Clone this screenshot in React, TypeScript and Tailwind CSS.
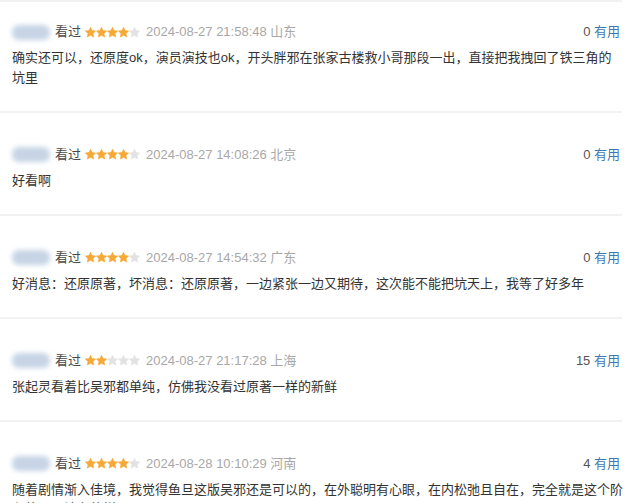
import React from "react";

type Review = {
  stars: number;
  time: string;
  loc: string;
  useful: number;
  text: string;
};

const reviews: Review[] = [
  {
    stars: 4,
    time: "2024-08-27 21:58:48",
    loc: "山东",
    useful: 0,
    text: "确实还可以，还原度ok，演员演技也ok，开头胖邪在张家古楼救小哥那段一出，直接把我拽回了铁三角的坑里",
  },
  { stars: 4, time: "2024-08-27 14:08:26", loc: "北京", useful: 0, text: "好看啊" },
  {
    stars: 4,
    time: "2024-08-27 14:54:32",
    loc: "广东",
    useful: 0,
    text: "好消息：还原原著，坏消息：还原原著，一边紧张一边又期待，这次能不能把坑天上，我等了好多年",
  },
  {
    stars: 2,
    time: "2024-08-27 21:17:28",
    loc: "上海",
    useful: 15,
    text: "张起灵看着比吴邪都单纯，仿佛我没看过原著一样的新鲜",
  },
  {
    stars: 4,
    time: "2024-08-28 10:10:29",
    loc: "河南",
    useful: 4,
    text: "随着剧情渐入佳境，我觉得鱼旦这版吴邪还是可以的，在外聪明有心眼，在内松弛且自在，完全就是这个阶段的吴邪该有的样子",
  },
];

function Star({ on }: { on: boolean }) {
  return (
    <svg width="11" height="11" viewBox="1 1.5 22 21" className="block">
      <path
        d="M12 1.5l3.1 6.6 7.2.9-5.3 5 1.4 7.1L12 17.6l-6.4 3.5 1.4-7.1-5.3-5 7.2-.9z"
        fill={on ? "#f6a937" : "#e3e3e3"}
        stroke={on ? "#f6a937" : "#e3e3e3"}
        strokeWidth="1.2"
        strokeLinejoin="round"
      />
    </svg>
  );
}

function Item({ r, first }: { r: Review; first: boolean }) {
  return (
    <div
      className={`border-t-2 border-[#f2f2f2] pl-[12px] pr-[2px] pb-[23.5px] ${
        first ? "pt-[20px]" : "pt-[32px]"
      }`}
    >
      <div className="flex items-center h-[20px] text-[13px] leading-[20px]">
        <div className="w-[38px] h-[15px] rounded-[7px] bg-[#c6d4e5] blur-[2.5px]" />
        <span className="ml-[5px] text-[#494949]">看过</span>
        <span className="ml-[4px] flex">
          {[0, 1, 2, 3, 4].map((i) => (
            <Star key={i} on={i < r.stars} />
          ))}
        </span>
        <span className="ml-[6px] text-[#a8a8a8]">
          {r.time} {r.loc}
        </span>
        <span className="ml-auto text-[#555]">
          {r.useful} <span className="text-[#3f77b3]">有用</span>
        </span>
      </div>
      <div className="mt-[6px] w-[611.5px] text-[13px] leading-[19.5px] text-[#333]">{r.text}</div>
    </div>
  );
}

export default function App() {
  return (
    <div
      className="w-[640px] h-[503px] overflow-hidden bg-white"
      style={{ fontFamily: '"Liberation Sans", "Noto Sans CJK SC", sans-serif' }}
    >
      <div className="w-[622px]">
        {reviews.map((r, i) => (
          <Item key={i} r={r} first={i === 0} />
        ))}
      </div>
    </div>
  );
}
